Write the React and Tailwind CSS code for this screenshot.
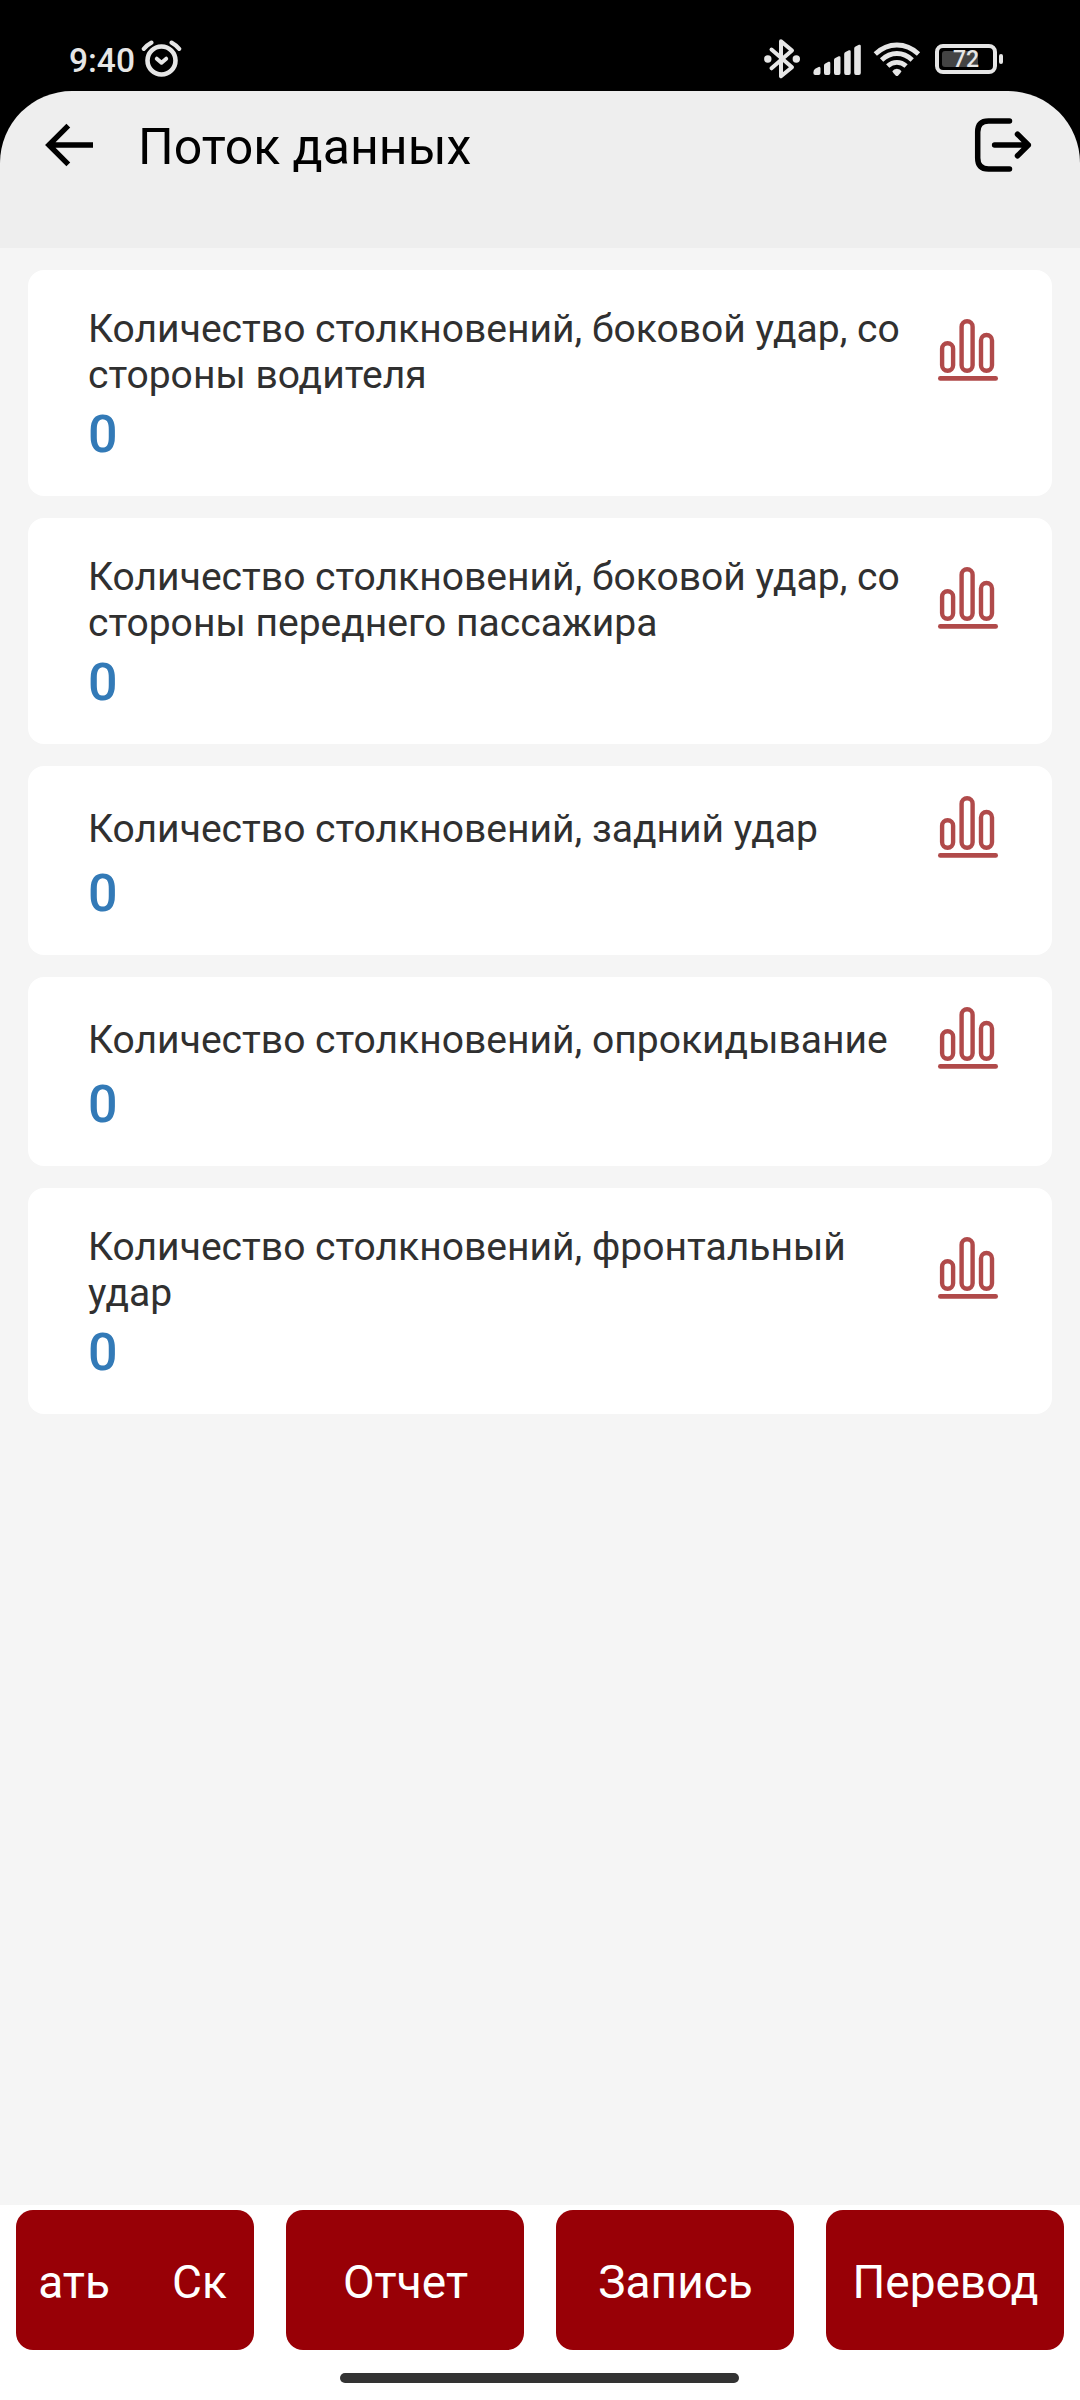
import React from "react";

const readings = [
  { title: "Количество столкновений, боковой удар, со стороны водителя", value: "0" },
  { title: "Количество столкновений, боковой удар, со стороны переднего пассажира", value: "0" },
  { title: "Количество столкновений, задний удар", value: "0" },
  { title: "Количество столкновений, опрокидывание", value: "0" },
  { title: "Количество столкновений, фронтальный удар", value: "0" },
];

function AlarmIcon() {
  return (
    <svg className="ml-[6px] mt-[40px] h-[38px] w-[41px]" viewBox="141 40 41 38" fill="none" stroke="#e6e6e6" strokeLinecap="round" strokeLinejoin="round">
      <circle cx="161.5" cy="60.5" r="14" strokeWidth="4.6" />
      <path d="M156.8 58.7l4.7 4 4.7-4" strokeWidth="4" />
      <path d="M143.8 48.8q3.4-3.9 7.6-6.2M179.2 48.8q-3.4-3.9-7.6-6.2" strokeWidth="4.2" />
    </svg>
  );
}

function BluetoothIcon() {
  return (
    <svg className="h-[42px] w-[38px]" viewBox="763 38 38 42" fill="none" stroke="#e6e6e6" strokeWidth="4" strokeLinecap="round" strokeLinejoin="round">
      <path d="M771.5 49.5L792 67.3 781 76.2V41.2L792 50.5 771.5 68.3" />
      <circle cx="767.8" cy="59" r="3.7" fill="#e6e6e6" stroke="none" />
      <circle cx="796.3" cy="59" r="3.7" fill="#e6e6e6" stroke="none" />
    </svg>
  );
}

function SignalIcon() {
  return (
    <svg className="ml-[12px] h-[42px] w-[50px]" viewBox="813 38 50 42" fill="#e6e6e6">
      <path d="M813.4 72.5q0-2.6 1.8-3.8l3.4-1.7q1.9-.6 1.9 1.5v4.5q0 2-1.9 2h-3.4q-1.8 0-1.8-2z" />
      <path d="M824 65.5q0-1.4 1.3-2l3.2-1.7q1.8-.6 1.8 1.3v10q0 2-1.9 2h-2.6q-1.8 0-1.8-2z" />
      <path d="M834 60q0-1.4 1.3-2l3.4-1.7q1.8-.6 1.8 1.3v15.5q0 2-1.9 2h-2.8q-1.8 0-1.8-2z" />
      <path d="M844.2 54q0-1.4 1.3-2l3.4-1.7q1.8-.6 1.8 1.3v21.5q0 2-1.9 2h-2.8q-1.8 0-1.8-2z" />
      <path d="M854.2 48.5q0-1.4 1.3-2l3.4-1.7q1.9-.6 1.9 1.3v27q0 2-1.9 2h-2.9q-1.8 0-1.8-2z" />
    </svg>
  );
}

function WifiIcon() {
  return (
    <svg className="ml-[10px] h-[42px] w-[48px]" viewBox="873 38 48 42" fill="none" stroke="#e6e6e6" strokeWidth="4.8">
      <path d="M875.3 54Q885 45 896.9 45T918.5 54" />
      <path d="M881.6 60Q888.5 53.5 896.9 53.5T912.2 60" />
      <path d="M887.7 66Q891.8 62.3 896.9 62.3T906.1 66" />
      <path d="M892.3 71.3q1.4-2.5 4.6-2.5t4.6 2.5q-1 2.2-3.3 4.1-1.3 1-2.6 0-2.3-1.9-3.3-4.1z" fill="#e6e6e6" stroke="none" />
    </svg>
  );
}

function BatteryIcon() {
  return (
    <div className="ml-[14px] flex items-center">
      <div className="relative flex h-[30px] w-[62px] items-center justify-center rounded-[8px] border-[4px] border-[#e6e6e6]">
        <div className="absolute left-[3px] top-[3px] h-[16px] w-[36px] rounded-[3px] bg-[#444444]" />
        <span className="relative pt-[2px] text-[23px] font-medium leading-[24px] text-[#e6e6e6]">72</span>
      </div>
      <div className="ml-[2px] h-[10px] w-[4px] rounded-[2px] bg-[#e6e6e6]" />
    </div>
  );
}

function ChartIcon() {
  return (
    <svg className="h-[67px] w-[62px] shrink-0" viewBox="0 0 62 67" fill="none" stroke="#b04a4a" strokeWidth="4.4">
      <rect x="5.1" y="24.2" width="11" height="27.6" rx="5.5" />
      <rect x="24.6" y="2.3" width="11" height="49.5" rx="5.5" />
      <rect x="44" y="16" width="11" height="35.8" rx="5.5" />
      <path d="M3.3 59.4H58.7" strokeWidth="4.6" strokeLinecap="round" />
    </svg>
  );
}

function ReadingCard({ title, value }) {
  return (
    <article className="rounded-[16px] bg-white pb-[31px] pl-[60px] pr-[53px] pt-[30px]">
      <div className="flex min-h-[67px] items-center justify-between">
        <h2 className="w-[826px] pb-[6.25px] pt-[5.75px] text-[39.06px] font-normal leading-[46px] text-[#303030]">{title}</h2>
        <ChartIcon />
      </div>
      <p className="h-[61px] text-[52px] font-medium leading-[61px] text-[#337ab7]">{value}</p>
    </article>
  );
}

function ActionButton({ children }) {
  return (
    <button className="flex h-[140px] items-center justify-center overflow-hidden whitespace-nowrap rounded-[17px] bg-[#980006] pl-[1px] pt-[4px] text-[46px] leading-[54px] text-white">
      {children}
    </button>
  );
}

export default function App() {
  return (
    <div className="flex h-[2400px] w-[1080px] flex-col overflow-hidden bg-[#f5f5f5] font-['Roboto',sans-serif]">
      <div className="bg-black">
        <div className="flex h-[91px] items-start justify-between pl-[69px] pr-[77px]">
          <div className="flex items-start">
            <span className="mt-[41px] text-[33.5px] font-medium leading-[40px] text-[#e6e6e6]">9:40</span>
            <AlarmIcon />
          </div>
          <div className="mt-[38px] flex items-center">
            <BluetoothIcon />
            <SignalIcon />
            <WifiIcon />
            <BatteryIcon />
          </div>
        </div>
        <header className="flex h-[157px] items-start rounded-t-[72px] bg-[#eeeeee] pl-[45px] pr-[47px]">
          <svg className="mt-[31px] h-[46px] w-[49px]" viewBox="45 122 49 46" fill="none" stroke="#000" strokeWidth="5.4">
            <path d="M93 145H49M68.3 125.7L48.9 145 68.3 164.3" />
          </svg>
          <h1 className="ml-[44px] mt-[27px] text-[50px] font-normal leading-[59px] text-black">Поток данных</h1>
          <svg className="ml-auto mt-[25px] h-[58px] w-[60px]" viewBox="973 116 60 58" fill="none" stroke="#000" strokeWidth="5.5" strokeLinecap="round" strokeLinejoin="round">
            <path d="M1009.5 121H988.5Q977.7 121 977.7 132V158Q977.7 169 988.5 169H1009.5" />
            <path d="M994.6 145H1028.3M1017.5 134.2L1028.3 145 1017.5 155.8" />
          </svg>
        </header>
      </div>
      <main className="flex flex-1 flex-col gap-[22px] px-[28px] pt-[22px]">
        {readings.map((r) => (
          <ReadingCard key={r.title} title={r.title} value={r.value} />
        ))}
      </main>
      <footer className="flex h-[195px] flex-col items-center bg-white pt-[5px]">
        <div className="grid w-full grid-cols-4 gap-[32px] px-[16px]">
          <ActionButton>
            <span>ать</span>
            <span className="ml-[62px] mr-[6px]">Ск</span>
          </ActionButton>
          <ActionButton>Отчет</ActionButton>
          <ActionButton>Запись</ActionButton>
          <ActionButton>Перевод</ActionButton>
        </div>
        <div className="mr-[1px] mt-[23px] h-[10px] w-[399px] rounded-full bg-[#333333]" />
      </footer>
    </div>
  );
}
